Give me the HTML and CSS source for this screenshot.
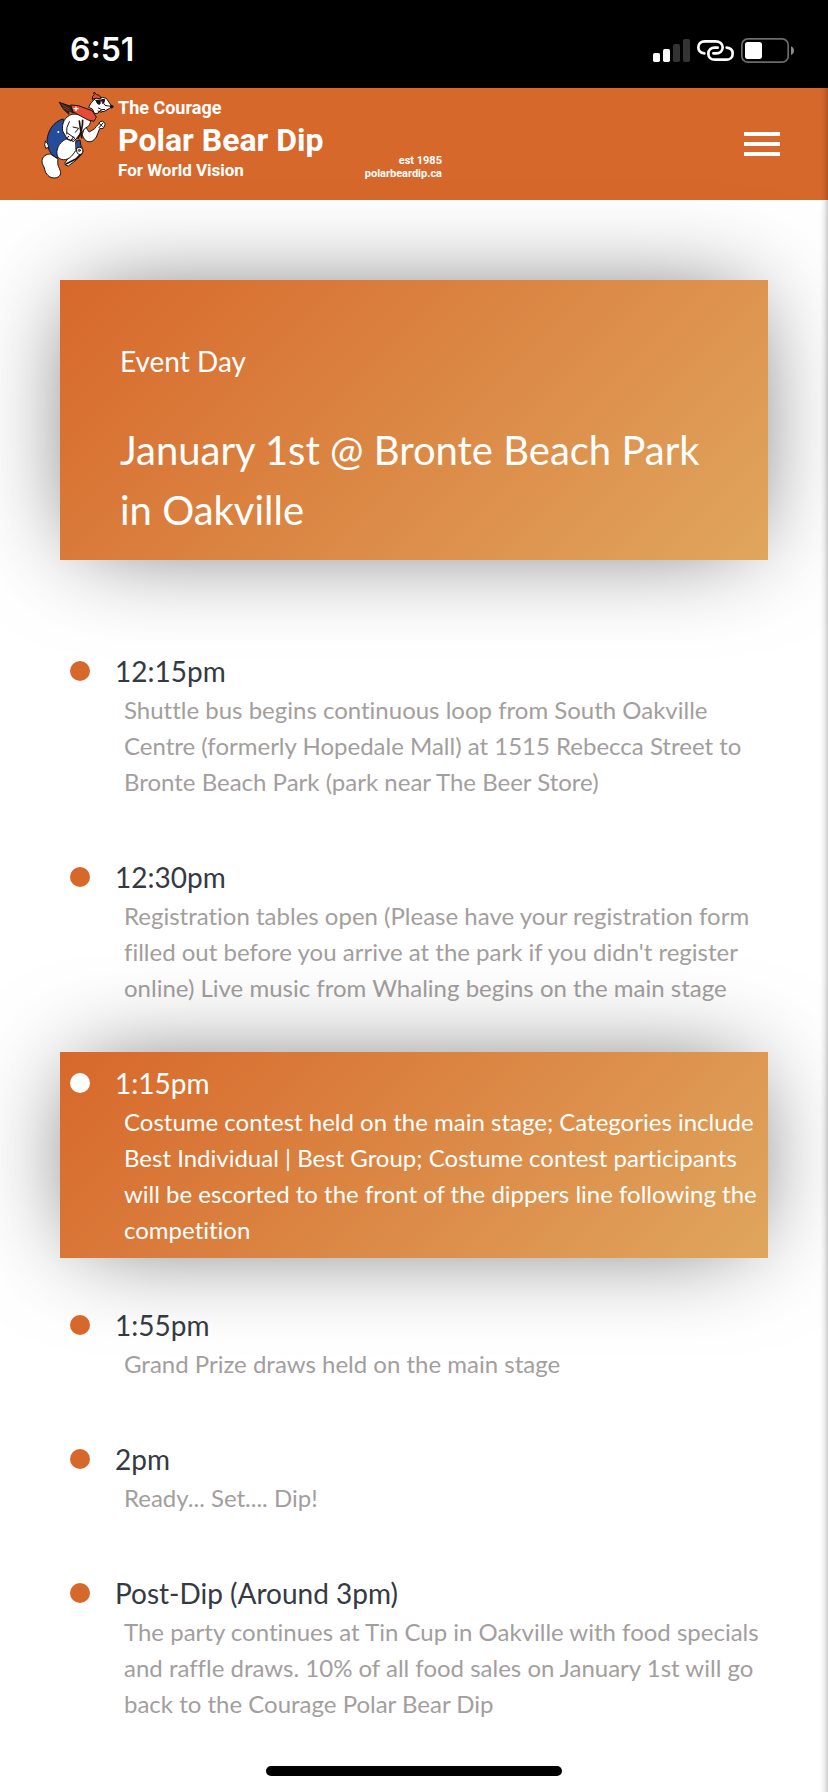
FILE: index.html
```html
<!DOCTYPE html>
<html lang="en">
<head>
<meta charset="utf-8">
<meta name="viewport" content="width=device-width, initial-scale=1">
<title>Polar Bear Dip – Event Day</title>
<link rel="stylesheet" href="styles.css">
</head>
<body>
<div class="status-bar">
  <span class="status-time">6:51</span>
  <div class="status-icons">
    <svg class="icon-signal" viewBox="0 0 111 69" aria-hidden="true">
      <rect x="0" y="42" width="21" height="27" rx="5" fill="#fff"/>
      <rect x="30" y="30" width="21" height="39" rx="5" fill="#fff"/>
      <rect x="60" y="15" width="21" height="54" rx="5" fill="#333"/>
      <rect x="90" y="0" width="21" height="69" rx="5" fill="#333"/>
    </svg>
    <svg class="icon-link" viewBox="0 0 111 63" aria-hidden="true">
      <g fill="none" stroke="#fff" stroke-width="8" stroke-linecap="round">
        <path d="M22 40C10 39 4 32 4 22C4 11 12 4 23 4H56C68 4 77 12 77 22C77 33 69 40 58 40H49"/>
        <path d="M89 23C101 24 107 31 107 41C107 52 99 59 88 59H54C42 59 34 51 34 41C34 30 42 23 53 23H62"/>
      </g>
    </svg>
    <svg class="icon-battery" viewBox="0 0 159 75" aria-hidden="true">
      <rect x="2.5" y="2.5" width="139" height="70" rx="18" fill="none" stroke="#6b6b6b" stroke-width="5"/>
      <rect x="12" y="12" width="51" height="51" rx="8" fill="#fff"/>
      <path d="M150 25Q159 29 159 38T150 51Z" fill="#8a8a8a"/>
    </svg>
  </div>
</div>

<header class="site-header">
  <a class="logo" href="#">
    <svg class="logo-bear" viewBox="30 33 222 267" aria-hidden="true">
      <g stroke="#1b1210" stroke-width="3" stroke-linejoin="round" stroke-linecap="round">
        <path fill="#fff" d="M60 222C48 222 38 229 36 242C35 254 43 258 44 268C46 281 58 295 75 294C90 292 95 281 90 270C86 260 81 254 84 238Z"/>
        <path fill="#fff" d="M112 238L104 250Q105 258 115 258L139 240L157 221Q162 204 151 196L132 212Z"/>
        <path fill="none" stroke-width="5" d="M108 252L139 236L151 224"/>
        <path fill="#254b9b" d="M98 117C70 126 54 151 51 181C51 206 62 226 84 235L112 205L107 140Z"/>
        <path fill="#fff" d="M46 184Q53 184 57 202L47 205Q41 194 46 184Z"/>
        <path fill="#fff" d="M106 178C86 188 77 210 82 228C91 243 110 243 125 228C139 211 145 201 143 187L132 174Z"/>
        <path fill="#254b9b" d="M138 184L150 180L154 202L139 208Z"/>
        <path fill="#fff" d="M139 206Q151 196 158 208Q161 220 150 224Q139 223 139 206Z"/>
        <path fill="#fff" d="M166 137C171 146 173 152 178 156L194 146Q199 139 205 133Q209 122 218 123L226 132L220 145L209 146L199 171Q188 188 174 185Q162 181 157 165Z"/>
        <path fill="#fff" d="M125 103C103 111 95 130 98 153L111 176L131 185L165 145Q184 137 181 119L151 103Z"/>
        <path fill="none" stroke-width="5" d="M158 121Q158 151 144 175M148 123L155 173"/>
        <path fill="none" d="M118 125Q107 142 110 162M129 141L146 145L136 157M112 159L135 175Q126 186 112 178Q109 171 116 169M122 183L130 171M207 130L217 139M219 129L207 143"/>
        <path fill="#382321" d="M88 67L122 79L132 99L116 93L117 103Q97 89 88 67Z"/>
        <path fill="none" stroke="#9d4d31" stroke-width="2" d="M96 74L118 87M99 82L121 95"/>
        <path fill="#fff" d="M193 58Q205 47 229 55L244 77Q246 82 239 85L225 93Q220 98 211 91Q205 103 194 101L187 87L176 82Q181 68 193 58Z"/>
        <path fill="#e44b38" d="M123 75L145 77L186 92L199 111L192 124L174 120L130 96Z"/>
        <path fill="none" stroke="#fff" stroke-width="4" d="M138 81V92M132 86H144"/>
        <path fill="#e44b38" d="M187 57Q185 47 193 44Q189 37 193 36L199 44Q212 44 213 57Q200 52 187 57Z"/>
        <path fill="#1b1210" d="M198 61L211 60L210 72Q202 76 198 61ZM215 59L224 58Q224 66 219 70Z"/>
        <path fill="none" d="M221 65Q220 72 225 76Q234 78 245 79M205 84Q213 91 224 89M204 93L214 97"/>
        <ellipse cx="245" cy="80" rx="4" ry="4" fill="#1b1210"/>
        <circle cx="85" cy="156" r="3" fill="#fff" stroke="none"/>
        <circle cx="148" cy="211" r="3" fill="none"/>
      </g>
    </svg>
    <span class="logo-text">
      <span class="logo-top">The Courage</span>
      <span class="logo-large">Polar Bear Dip</span>
      <span class="logo-bottom">For World Vision</span>
    </span>
    <span class="logo-note">
      <span>est 1985</span>
      <span>polarbeardip.ca</span>
    </span>
  </a>
  <button class="menu-button" type="button" aria-label="Menu">
    <span></span><span></span><span></span>
  </button>
</header>

<main class="content">
  <section class="event-card">
    <p class="event-label">Event Day</p>
    <h1 class="event-title">January 1st @ Bronte Beach Park in Oakville</h1>
  </section>

  <ol class="timeline">
    <li class="entry">
      <h2 class="entry-time">12:15pm</h2>
      <p class="entry-text">Shuttle bus begins continuous loop from South Oakville Centre (formerly Hopedale Mall) at 1515 Rebecca Street to Bronte Beach Park (park near The Beer Store)</p>
    </li>
    <li class="entry">
      <h2 class="entry-time">12:30pm</h2>
      <p class="entry-text">Registration tables open (Please have your registration form filled out before you arrive at the park if you didn't register online) Live music from Whaling begins on the main stage</p>
    </li>
    <li class="entry entry-active">
      <h2 class="entry-time">1:15pm</h2>
      <p class="entry-text">Costume contest held on the main stage; Categories include Best Individual | Best Group; Costume contest participants will be escorted to the front of the dippers line following the competition</p>
    </li>
    <li class="entry">
      <h2 class="entry-time">1:55pm</h2>
      <p class="entry-text">Grand Prize draws held on the main stage</p>
    </li>
    <li class="entry">
      <h2 class="entry-time">2pm</h2>
      <p class="entry-text">Ready... Set.... Dip!</p>
    </li>
    <li class="entry">
      <h2 class="entry-time">Post-Dip (Around 3pm)</h2>
      <p class="entry-text">The party continues at Tin Cup in Oakville with food specials and raffle draws. 10% of all food sales on January 1st will go back to the Courage Polar Bear Dip</p>
    </li>
  </ol>
</main>

<div class="home-indicator"></div>
</body>
</html>
```
FILE: styles.css
```css
:root {
  --orange: #d7682b;
  --gold: #e0a65e;
  --ink: #343a43;
  --muted: #a39e9e;
}

* {
  box-sizing: border-box;
}

body {
  margin: 0;
  min-height: 100vh;
  display: flex;
  flex-direction: column;
  position: relative;
  background: #fff;
  color: var(--ink);
  font-family: Lato, "Open Sans", sans-serif;
  font-variant-ligatures: no-common-ligatures;
}

/* Edge shadow of the closed side menu */
body::after {
  content: "";
  position: absolute;
  top: 88px;
  right: 0;
  bottom: 0;
  width: 8px;
  background: linear-gradient(to left, rgba(0, 0, 0, 0.2), rgba(0, 0, 0, 0.06) 50%, rgba(0, 0, 0, 0));
  pointer-events: none;
}

h1,
h2,
p,
ol {
  margin: 0;
  padding: 0;
  font-weight: 400;
}

.status-bar {
  display: flex;
  align-items: center;
  justify-content: space-between;
  height: 88px;
  padding: 12px 34px 0 70px;
  background: #000;
  color: #fff;
}

.status-time {
  font: 600 32px/40px Inter, sans-serif;
}

.status-icons {
  display: flex;
  align-items: center;
  gap: 7px;
}

.icon-signal {
  width: 37px;
  height: 23px;
}

.icon-link {
  width: 37px;
  height: 21px;
}

.icon-battery {
  width: 53px;
  height: 25px;
}

.site-header {
  display: flex;
  align-items: center;
  justify-content: space-between;
  height: 112px;
  padding: 0 48px 0 40px;
  background: var(--orange);
}

.logo {
  display: flex;
  align-items: flex-end;
  padding-bottom: 18px;
  color: #fff;
  text-decoration: none;
  font-family: Roboto, "Liberation Sans", sans-serif;
  font-weight: 700;
}

.logo-bear {
  width: 74px;
  height: 89px;
}

.logo-text {
  display: flex;
  flex-direction: column;
  width: 208px;
  margin-left: 4px;
  white-space: nowrap;
}

.logo-top {
  font-size: 18px;
  line-height: 24px;
}

.logo-large {
  font-size: 32px;
  line-height: 40px;
}

.logo-bottom {
  font-size: 17px;
  line-height: 20px;
}

.logo-note {
  display: flex;
  flex-direction: column;
  align-items: flex-end;
  width: 116px;
  font-size: 11px;
  line-height: 13px;
}

.menu-button {
  display: flex;
  flex-direction: column;
  gap: 6px;
  width: 36px;
  padding: 0;
  border: 0;
  background: none;
}

.menu-button span {
  height: 4px;
  background: #fff;
}

.content {
  padding: 80px 60px 0;
}

.event-card,
.entry-active {
  background: linear-gradient(135deg, var(--orange), var(--gold));
  box-shadow: 0 0 100px -20px rgba(0, 0, 0, 0.65);
  color: #fff;
}

.event-card {
  padding: 60px 60px 20px;
}

.event-label {
  font-size: 28px;
  line-height: 42px;
}

.event-title {
  margin-top: 38px;
  font-size: 40px;
  line-height: 60px;
}

.timeline {
  display: flex;
  flex-direction: column;
  gap: 36px;
  margin-top: 80px;
  list-style: none;
}

.entry {
  padding: 10px 0 10px 10px;
}

.entry-time {
  display: flex;
  align-items: center;
  gap: 25px;
  font-size: 28px;
  line-height: 42px;
}

.entry-time::before {
  content: "";
  flex: none;
  width: 20px;
  height: 20px;
  border-radius: 50%;
  background: var(--orange);
}

.entry-active .entry-time::before {
  background: #fff;
}

.entry-text {
  padding-left: 54px;
  color: var(--muted);
  font-size: 24px;
  line-height: 36px;
}

.entry-active .entry-text {
  color: #fff;
}

.home-indicator {
  width: 296px;
  height: 10px;
  margin: auto auto 16px;
  border-radius: 5px;
  background: #000;
}
```
